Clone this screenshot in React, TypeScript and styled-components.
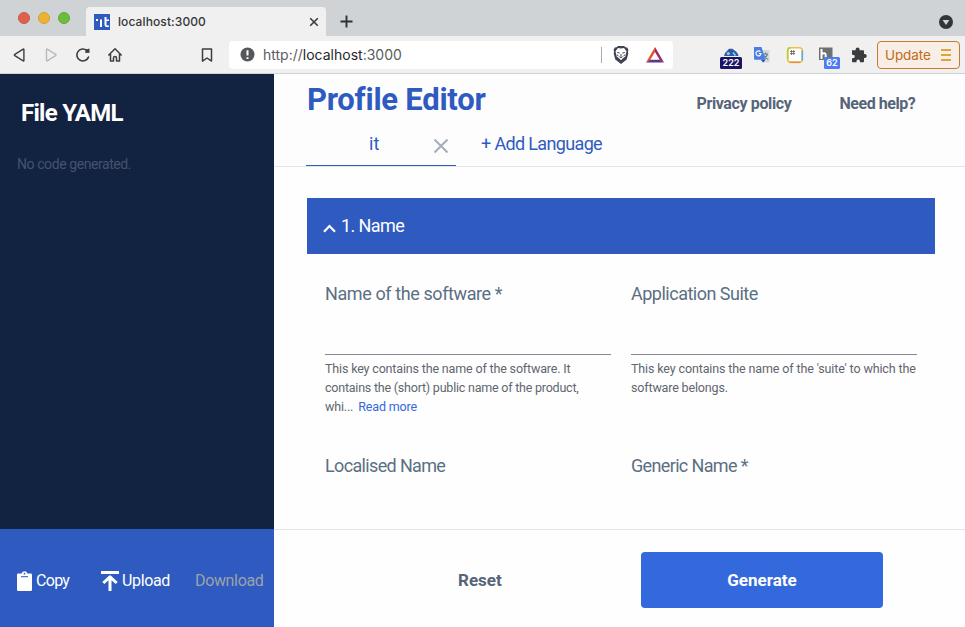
import React from "react";
import styled, { createGlobalStyle } from "styled-components";

const GlobalStyle = createGlobalStyle`
  *, *::before, *::after { box-sizing: border-box; }
  html, body { margin: 0; padding: 0; overflow: hidden; }
  button { margin: 0; padding: 0; border: 0; background: none; font: inherit; color: inherit; }
`;

const Window = styled.div`
  display: flex;
  flex-direction: column;
  width: 965px;
  height: 627px;
  overflow: hidden;
  background: #fefefe;
  font-family: Roboto, "Liberation Sans", sans-serif;
  white-space: nowrap;
`;

const Text = styled.span<{ $size: number; $spacing?: number; $weight?: number; $color?: string; $line?: number }>`
  display: block;
  font-size: ${(p) => p.$size}px;
  letter-spacing: ${(p) => p.$spacing ?? 0}px;
  font-weight: ${(p) => p.$weight ?? 400};
  line-height: ${(p) => p.$line ?? 24}px;
  ${(p) => p.$color && `color: ${p.$color};`}
`;

/* ---------- browser chrome ---------- */

const TabStrip = styled.header`
  display: flex;
  flex: none;
  height: 36px;
  padding: 7px 12px 0 18px;
  background: #cfd3d6;
`;

const Lights = styled.div`
  display: flex;
  gap: 8px;
  width: 68px;
  padding-top: 5px;
`;

const Light = styled.i<{ $fill: string; $edge: string }>`
  width: 12px;
  height: 12px;
  border-radius: 50%;
  background: ${(p) => p.$fill};
  border: 1px solid ${(p) => p.$edge};
`;

const BrowserTab = styled.div`
  display: flex;
  align-items: center;
  width: 240px;
  height: 29px;
  padding: 0 7px 0 8px;
  border-radius: 4px 4px 0 0;
  background: #f0f0f0;
  color: #343638;
  font-family: Inter, sans-serif;
`;

const TabTitle = styled(Text)`
  flex: 1;
  margin-left: 8px;
`;

const NewTab = styled.div`
  flex: 1;
  padding: 8px 0 0 14px;
  svg { display: block; }
`;

const MenuDot = styled.div`
  padding-top: 8px;
  svg { display: block; }
`;

const Toolbar = styled.nav`
  display: flex;
  align-items: center;
  flex: none;
  height: 38px;
  padding: 0 5px 0 11px;
  background: #f0f0f0;
  border-bottom: 1px solid #d0d1d1;
  svg { display: block; flex: none; }
`;

const NavIcons = styled.div`
  display: flex;
  gap: 16px;
  width: 190px;
`;

const AddressBar = styled.div`
  display: flex;
  align-items: center;
  width: 444px;
  height: 28px;
  margin-left: 16px;
  padding: 0 9px 0 11px;
  border-radius: 4px;
  background: #fff;
  color: #5b5d61;
  font-family: Inter, sans-serif;
  b { font-weight: 400; color: #26282b; }
`;

const Url = styled(Text)`
  flex: 1;
  margin-left: 8px;
`;

const Separator = styled.i`
  width: 1px;
  height: 16px;
  margin-right: 10px;
  background: #adadad;
`;

const Shields = styled.div`
  display: flex;
  align-items: center;
  gap: 16px;
`;

const Extensions = styled.div`
  display: flex;
  flex: 1;
  align-items: center;
  padding-left: 47px;
  gap: 12.3px;
`;

const Extension = styled.div`
  position: relative;
  width: 20px;
  height: 20px;
`;

const Badge = styled.span<{ $bg: string; $left: number; $top: number; $width: number }>`
  position: absolute;
  left: ${(p) => p.$left}px;
  top: ${(p) => p.$top}px;
  width: ${(p) => p.$width}px;
  height: 12px;
  border-radius: 1.5px;
  background: ${(p) => p.$bg};
  color: #fff;
  font: 600 9px/12px Inter, sans-serif;
  text-align: center;
`;

const UpdateButton = styled.button`
  display: flex;
  align-items: center;
  justify-content: space-between;
  width: 83px;
  height: 28px;
  padding: 0 8px 0 7px;
  border: 1px solid #c47a2f;
  border-radius: 4px;
  background: #f8eee5;
  color: #c06c18;
  font-family: Inter, sans-serif;
`;

/* ---------- page ---------- */

const Page = styled.div`
  display: flex;
  flex: 1;
  min-height: 0;
`;

const Sidebar = styled.aside`
  display: flex;
  flex-direction: column;
  width: 274px;
  background: #122241;
`;

const Code = styled.div`
  flex: 1;
  padding: 23px 17px 0;
`;

const SidebarTitle = styled(Text)`
  margin: 0 0 23px 4px;
`;

const SidebarActions = styled.div`
  display: flex;
  align-items: center;
  height: 98px;
  padding: 6px 0 0 17px;
  background: #2f5bc1;
`;

const Action = styled.button<{ $width: number; $gap: number }>`
  display: flex;
  align-items: center;
  gap: ${(p) => p.$gap}px;
  width: ${(p) => p.$width}px;
  color: #fff;
  svg { display: block; flex: none; }
`;

const Main = styled.main`
  display: flex;
  flex: 1;
  flex-direction: column;
  min-width: 0;
`;

const EditorHeader = styled.div`
  display: flex;
  flex-direction: column;
  height: 93px;
  padding: 6px 0 0 32px;
  background: #fdfdfd;
  border-bottom: 1px solid #e4e5e6;
`;

const TitleRow = styled.div`
  display: flex;
  height: 44px;
`;

const Title = styled(Text)`
  width: 390.5px;
  padding-left: 1px;
`;

const HelpLink = styled(Text)<{ $width: number }>`
  width: ${(p) => p.$width}px;
  padding-top: 12px;
`;

const Languages = styled.div`
  display: flex;
  flex: 1;
`;

const LanguageTab = styled.div`
  display: flex;
  width: 150px;
  height: 42px;
  margin-right: 25px;
  padding: 8px 0 0 63px;
  border-bottom: 1px solid #2f5bc1;
  svg { display: block; margin-top: 6px; }
`;

const CloseSlot = styled.span`
  margin: 0 7px 0 auto;
`;

const AddLanguage = styled(Text)`
  padding-top: 8px;
`;

const Form = styled.div`
  flex: 1;
  min-height: 0;
  padding: 31px 30px 0 33px;
`;

const SectionBar = styled.div`
  display: flex;
  align-items: center;
  height: 56px;
  padding: 0 16px;
  gap: 5px;
  background: #2f5bc1;
  color: #fff;
  svg { display: block; margin-top: 4px; }
`;

const Fields = styled.div`
  display: grid;
  grid-template-columns: 286px 286px;
  grid-auto-rows: 172px;
  column-gap: 20px;
  padding: 28px 18px 0;
`;

const Field = styled.label`
  display: block;
`;

const Line = styled.div`
  height: 49px;
  border-bottom: 1px solid #85888c;
  margin-bottom: 4px;
`;

const Inline = styled.span`
  display: flex;
  gap: 5px;
`;

const FormActions = styled.footer`
  display: flex;
  height: 98px;
  padding: 22px 82px 0 184px;
  justify-content: space-between;
  border-top: 1px solid #e4e5e6;
`;

const ResetButton = styled.button`
  height: 56px;
  color: #566479;
`;

const GenerateButton = styled.button`
  display: flex;
  align-items: center;
  justify-content: center;
  width: 242px;
  height: 56px;
  border-radius: 4px;
  background: #3468dd;
  color: #fff;
`;

/* ---------- icons ---------- */

const Svg = ({ w, h = w, children }: { w: number; h?: number; children: React.ReactNode }) => (
  <svg width={w} height={h} viewBox={`0 0 ${w} ${h}`} fill="none">{children}</svg>
);

const Favicon = () => (
  <Svg w={16}>
    <rect width="16" height="16" fill="#2f5bc1" />
    <path d="M2 5h2v2H2zM6 5.5h2V13H6zM10.5 3h2v2.5H15V7h-2.5v3.7q0 .8.8.8H15V13h-2.3q-2.2 0-2.2-2.2z" fill="#fff" />
  </Svg>
);

const Triangle = ({ flip, color }: { flip?: boolean; color: string }) => (
  <Svg w={16}>
    <path
      d={flip ? "M3.5 2.6v10.8q0 .8.7.4l8.4-5.2q.9-.6 0-1.2L4.2 2.2q-.7-.4-.7.4z" : "M12.9 2.6v10.8q0 .8-.7.4L3.8 8.6q-.9-.6 0-1.2l8.4-5.2q.7-.4.7.4z"}
      stroke={color}
      strokeWidth="1.4"
    />
  </Svg>
);

const Reload = () => (
  <Svg w={16}>
    <path d="M13.5 10.1A6 6 0 1 1 11.8 3.4" stroke="#3c3e41" strokeWidth="1.6" strokeLinecap="round" />
    <path d="M10.4 2.7 14.4 1.6l.2 4.2-4.2.1z" fill="#3c3e41" />
  </Svg>
);

const Home = () => (
  <Svg w={16}>
    <path d="M1.8 8 8 1.8 14.2 8M3.5 7v7h3v-3.2q0-1.3 1.5-1.3t1.5 1.3V14h3V7" stroke="#3c3e41" strokeWidth="1.5" strokeLinecap="round" strokeLinejoin="round" />
  </Svg>
);

const Bookmark = () => (
  <Svg w={12} h={16}>
    <path d="M1.5 1.9h9v12.2L6 11l-4.5 3.1z" stroke="#3c3e41" strokeWidth="1.5" strokeLinejoin="round" />
  </Svg>
);

const Warning = () => (
  <Svg w={15}>
    <circle cx="7.5" cy="7.5" r="7" fill="#55575b" />
    <path d="M7.5 3.2v5.2M7.5 10.2v1.9" stroke="#fff" strokeWidth="2" />
  </Svg>
);

const Lion = () => (
  <Svg w={18} h={20}>
    <path d="M4.5 2.2 6 1h6l1.5 1.2 1.7.4 1.3 2.5-.6 1.4.4 2-1.6 6.1L9 19l-5.7-4.4-1.6-6.1.4-2-.6-1.4 1.3-2.5z" fill="#3f4150" />
    <path d="M6 3 9 3.6 12 3l2.5 3.2-.5 2.4-.7 3L11 13.3 9 15.2l-2-1.9-2.3-1.7-.7-3-.5-2.4z" fill="#fff" />
    <path d="m5.2 7.4 2.5.7M12.8 7.4l-2.5.7M9 9v2.6M7.4 11.6 9 12.7l1.6-1.1M5.2 9.6l1 1.6M12.8 9.6l-1 1.6" stroke="#3f4150" strokeWidth="1" />
  </Svg>
);

const BatTriangle = () => (
  <Svg w={18} h={16}>
    <path d="M9 0 0 15.5l4.2-2.6L9 5z" fill="#e5522e" />
    <path d="m9 0 9 15.5-4.2-2.6L9 5z" fill="#9c2b63" />
    <path d="M0 15.5h18l-4.2-2.8H4.2z" fill="#61358b" />
  </Svg>
);

const BlueEye = () => (
  <Svg w={20}>
    <path d="M4 11q.5-3.500 3-5l2-2.300h3.500L14 5q4 2.500 4.500 6z" fill="#285da8" />
    <circle cx="8.300" cy="8.600" r="1.500" fill="#a9c9e8" />
    <path d="m13 7.500 2.500 3" stroke="#a9c9e8" strokeWidth="1.500" />
  </Svg>
);

const Translate = () => (
  <Svg w={20}>
    <path d="M8 5h9.5v12.5H11z" fill="#d5d9dc" />
    <path d="M11 9h5M13.5 7.5V9M15.5 9q-1 3.5-4 5M12 10.5q1.5 3 4.3 4" stroke="#6b7f89" strokeWidth="1.2" />
    <path d="M2 2h7.5l4 12.8H3.2Q2 14.8 2 13.6z" fill="#4a7de5" />
    <path d="m8.8 14.8 4.7 0-2.4 2.7z" fill="#2f4fae" />
    <path d="M8.4 6.7A2.5 2.500 0 1 0 9 8.500H6.800" stroke="#fff" strokeWidth="1.2" />
  </Svg>
);

const NoteBox = () => (
  <Svg w={20}>
    <rect x="2.700" y="2.700" width="14.600" height="14.600" rx="3" fill="#fff" stroke="#e8c63a" strokeWidth="1.600" />
    <path d="M2.700 14V5.500q0-2.800 2.800-2.800" stroke="#b5cf35" strokeWidth="1.600" />
    <path d="M4.500 17.300h11" stroke="#e79235" strokeWidth="1.600" />
    <path d="M17.300 5.500v10" stroke="#66a5ef" strokeWidth="1.600" />
    <path d="M6.500 5v5M8.700 5v5M5 6.500h5.200M5 8.600h5.200" stroke="#66615c" strokeWidth=".8" />
  </Svg>
);

const HSquare = () => (
  <Svg w={20}>
    <path d="M2 2.500h13.500V15H2z" fill="#6d6f71" />
    <path d="M4.500 4v10M4.800 8.800q3.800-1.600 3.900 1.200v4" stroke="#fff" strokeWidth="2" />
  </Svg>
);

const Puzzle = () => (
  <Svg w={20}>
    <path d="M3 5.2h3.6V4.4a2 2 0 0 1 4 0v.8h3.6q.8 0 .8.8v3h.8a2 2 0 0 1 0 4H15v3.5q0 .8-.8.8h-3.3v-1a1.7 1.7 0 0 0-3.4 0v1H3.800q-.8 0-.8-.8v-3.2h1a1.8 1.8 0 0 0 0-3.6H3z" fill="#3a3c3f" />
  </Svg>
);

const Clipboard = () => (
  <Svg w={15} h={20}>
    <path d="M1.2 2.5h3.4a3 3 0 0 1 5.8 0h3.4Q15 2.5 15 3.7v15.1q0 1.2-1.2 1.2H1.2Q0 20 0 18.8V3.7q0-1.2 1.2-1.2z" fill="#fff" />
    <path d="M4 5.700h7" stroke="#2f5bc1" strokeWidth="1" />
    <circle cx="7.500" cy="2.600" r=".9" fill="#2f5bc1" />
  </Svg>
);

const UploadIcon = () => (
  <Svg w={18} h={20}>
    <path d="M0 0h18v3H0z" fill="#fff" />
    <path d="M9 20V6.500M2.300 12 9 5.800l6.700 6.200" stroke="#fff" strokeWidth="3" strokeLinejoin="round" />
  </Svg>
);

const FieldLabel = ({ spacing, children }: { spacing: number; children: React.ReactNode }) => (
  <Text $size={18} $spacing={spacing} $color="#5b6f82">{children}</Text>
);

const NameField = ({ label, spacing, children }: { label: string; spacing: number; children?: React.ReactNode }) => (
  <Field>
    <FieldLabel spacing={spacing}>{label}</FieldLabel>
    <Line />
    {children}
  </Field>
);

const Hint = ({ children, spacing }: { children: React.ReactNode; spacing: number }) => (
  <Text $size={12.5} $line={19} $spacing={spacing} $color="#5f6670">{children}</Text>
);

export default function App() {
  return (
    <Window>
      <GlobalStyle />
      <TabStrip>
        <Lights>
          <Light $fill="#df604f" $edge="#cf5647" />
          <Light $fill="#ecb234" $edge="#d9a02c" />
          <Light $fill="#6cbd3d" $edge="#5dab35" />
        </Lights>
        <BrowserTab>
          <Favicon />
          <TabTitle $size={12} $weight={500} $spacing={0.1}>localhost:3000</TabTitle>
          <Svg w={10}><path d="m1.2 1.2 7.6 7.6m0-7.6L1.2 8.8" stroke="#3a3c3f" strokeWidth="1.6" /></Svg>
        </BrowserTab>
        <NewTab>
          <Svg w={13}><path d="M6.5.5v12M.5 6.5h12" stroke="#2f3133" strokeWidth="1.9" /></Svg>
        </NewTab>
        <MenuDot>
          <Svg w={14}>
            <circle cx="7" cy="7" r="7" fill="#333538" />
            <path d="M3.6 5h6.8L7 10z" fill="#cfd3d6" />
          </Svg>
        </MenuDot>
      </TabStrip>

      <Toolbar>
        <NavIcons>
          <Triangle color="#3c3e41" />
          <Triangle flip color="#b9babb" />
          <Reload />
          <Home />
        </NavIcons>
        <Bookmark />
        <AddressBar>
          <Warning />
          <Url $size={14}>http://<b>localhost</b>:3000</Url>
          <Separator />
          <Shields>
            <Lion />
            <BatTriangle />
          </Shields>
        </AddressBar>
        <Extensions>
          <Extension><BlueEye /><Badge $bg="#1b1464" $left={0} $top={12} $width={22}>222</Badge></Extension>
          <Extension><Translate /></Extension>
          <Extension><NoteBox /></Extension>
          <Extension><HSquare /><Badge $bg="#4c7cf0" $left={7} $top={12} $width={16}>62</Badge></Extension>
          <Extension><Puzzle /></Extension>
        </Extensions>
        <UpdateButton>
          <Text $size={13.5} $spacing={-0.1}>Update</Text>
          <Svg w={10} h={12}><path d="M0 1h10M0 6h10M0 11h10" stroke="#dda436" strokeWidth="1.8" /></Svg>
        </UpdateButton>
      </Toolbar>

      <Page>
        <Sidebar>
          <Code>
            <SidebarTitle $size={24} $weight={700} $line={32} $spacing={-0.72} $color="#fff">File YAML</SidebarTitle>
            <Text $size={14} $spacing={-0.42} $color="#44536d">No code generated.</Text>
          </Code>
          <SidebarActions>
            <Action $width={84} $gap={4}><Clipboard /><Text $size={16} $spacing={-0.7}>Copy</Text></Action>
            <Action $width={94} $gap={3}><UploadIcon /><Text $size={16} $spacing={-0.35}>Upload</Text></Action>
            <Action $width={72} $gap={0}><Text $size={16} $spacing={-0.35} $color="#9ba2a9">Download</Text></Action>
          </SidebarActions>
        </Sidebar>

        <Main>
          <EditorHeader>
            <TitleRow>
              <Title $size={31} $weight={700} $line={40} $spacing={-0.25} $color="#2f5bc1">Profile Editor</Title>
              <HelpLink $width={143} $size={16} $weight={700} $spacing={-0.38} $color="#566479">Privacy policy</HelpLink>
              <HelpLink $width={90} $size={16} $weight={700} $spacing={-0.45} $color="#566479">Need help?</HelpLink>
            </TitleRow>
            <Languages>
              <LanguageTab>
                <Text $size={18} $color="#2f5bc1">it</Text>
                <CloseSlot>
                  <Svg w={16}><path d="m1.5 1.5 13 13m0-13-13 13" stroke="#a5adba" strokeWidth="2" /></Svg>
                </CloseSlot>
              </LanguageTab>
              <AddLanguage $size={18} $spacing={-0.65} $color="#2f5bc1">+ Add Language</AddLanguage>
            </Languages>
          </EditorHeader>

          <Form>
            <SectionBar>
              <Svg w={13} h={9}><path d="M1 7.7 6.5 2 12 7.7" stroke="#fff" strokeWidth="2.2" /></Svg>
              <Text $size={18} $spacing={-0.6}>1. Name</Text>
            </SectionBar>
            <Fields>
              <NameField label="Name of the software *" spacing={-0.4}>
                <Hint spacing={-0.16}>This key contains the name of the software. It</Hint>
                <Hint spacing={-0.22}>contains the (short) public name of the product,</Hint>
                <Inline>
                  <Hint spacing={-0.16}>whi...</Hint>
                  <Text $size={12.5} $line={19} $spacing={-0.16} $color="#3468dd">Read more</Text>
                </Inline>
              </NameField>
              <NameField label="Application Suite" spacing={-0.5}>
                <Hint spacing={-0.13}>This key contains the name of the 'suite' to which the</Hint>
                <Hint spacing={-0.16}>software belongs.</Hint>
              </NameField>
              <FieldLabel spacing={-0.65}>Localised Name</FieldLabel>
              <FieldLabel spacing={-0.65}>Generic Name *</FieldLabel>
            </Fields>
          </Form>

          <FormActions>
            <ResetButton><Text $size={17} $weight={700}>Reset</Text></ResetButton>
            <GenerateButton><Text $size={17} $weight={700}>Generate</Text></GenerateButton>
          </FormActions>
        </Main>
      </Page>
    </Window>
  );
}
